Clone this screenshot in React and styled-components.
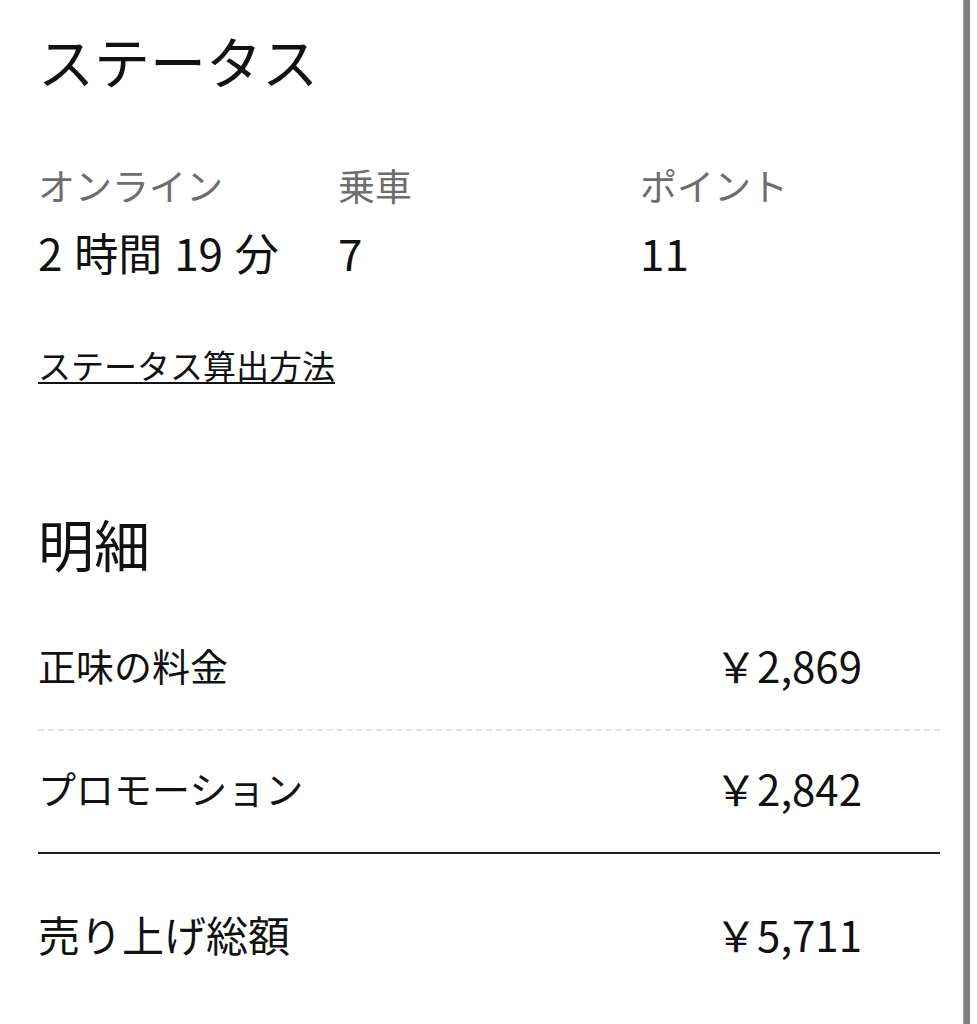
import { createGlobalStyle, styled } from 'styled-components';

const GlobalStyle = createGlobalStyle`
    html, body {
        margin: 0;
        padding: 0;
        background: #ffffff;
    }
    body {
        font-family: 'Noto Sans CJK JP', 'Noto Sans', sans-serif;
        color: #111111;
    }
`;

const Page = styled.div`
    display: flex;
    min-height: 100vh;
    width: 977px;
`;

const Content = styled.main`
    flex: 0 0 963px;
    box-sizing: border-box;
    padding: 27px 23px 0 38px;
`;

// the grey strip on the right edge of the screenshot
const EdgeBar = styled.div`
    flex: 0 0 7px;
    background: #7e7e7e;
    border-left: 1px solid #a8a8a8;
    box-sizing: border-box;
`;

const Heading = styled.h2`
    margin: ${(props) => props.$top || 0}px 0 0;
    font-size: 56px;
    font-weight: 400;
    line-height: 66px;
    letter-spacing: 0;
`;

const StatsGrid = styled.div`
    display: grid;
    grid-template-columns: 300px 302px 1fr;
    margin-top: 70px;
`;

const Stat = styled.div`
    display: flex;
    flex-direction: column;
    gap: 20px;
`;

const StatLabel = styled.span`
    font-size: 37px;
    line-height: 44px;
    color: #6d6d6d;
`;

const StatValue = styled.span`
    font-size: 44px;
    line-height: 50px;
    word-spacing: 2px;
    color: #111111;
`;

const HowLink = styled.a`
    display: inline-block;
    margin-top: 68px;
    font-size: 33px;
    line-height: 40px;
    color: #111111;
    text-decoration: underline;
    text-decoration-thickness: 2px;
    text-underline-offset: 3px;
`;

const Breakdown = styled.div`
    margin-top: 64px;
`;

const Row = styled.div`
    display: flex;
    align-items: center;
    justify-content: space-between;
    padding: ${(props) => props.$pad};
    padding-right: 78px;
    border-bottom: ${(props) =>
        props.$line === 'dashed'
            ? '2px dashed #e2e2e2'
            : props.$line === 'solid'
            ? '2px solid #222222'
            : 'none'};
`;

const RowLabel = styled.span`
    font-size: ${(props) => (props.$big ? 42 : 38)}px;
    line-height: 50px;
`;

const Amount = styled.span`
    font-size: 42px;
    line-height: 50px;
`;

const stats = [
    { label: 'オンライン', value: '2 時間 19 分' },
    { label: '乗車', value: '7' },
    { label: 'ポイント', value: '11' },
];

const rows = [
    { label: '正味の料金', amount: '￥2,869', line: 'dashed', pad: '0 0 39px' },
    { label: 'プロモーション', amount: '￥2,842', line: 'solid', pad: '32px 0 39px' },
    { label: '売り上げ総額', amount: '￥5,711', line: 'none', pad: '55px 0 0', big: true },
];

export default function App() {
    return (
        <>
            <GlobalStyle />
            <Page>
                <Content>
                    <Heading>ステータス</Heading>
                    <StatsGrid>
                        {stats.map((s) => (
                            <Stat key={s.label}>
                                <StatLabel>{s.label}</StatLabel>
                                <StatValue>{s.value}</StatValue>
                            </Stat>
                        ))}
                    </StatsGrid>
                    <HowLink href="#">ステータス算出方法</HowLink>
                    <Heading $top={125}>明細</Heading>
                    <Breakdown>
                        {rows.map((r) => (
                            <Row key={r.label} $line={r.line} $pad={r.pad}>
                                <RowLabel $big={r.big}>{r.label}</RowLabel>
                                <Amount>{r.amount}</Amount>
                            </Row>
                        ))}
                    </Breakdown>
                </Content>
                <EdgeBar />
            </Page>
        </>
    );
}
